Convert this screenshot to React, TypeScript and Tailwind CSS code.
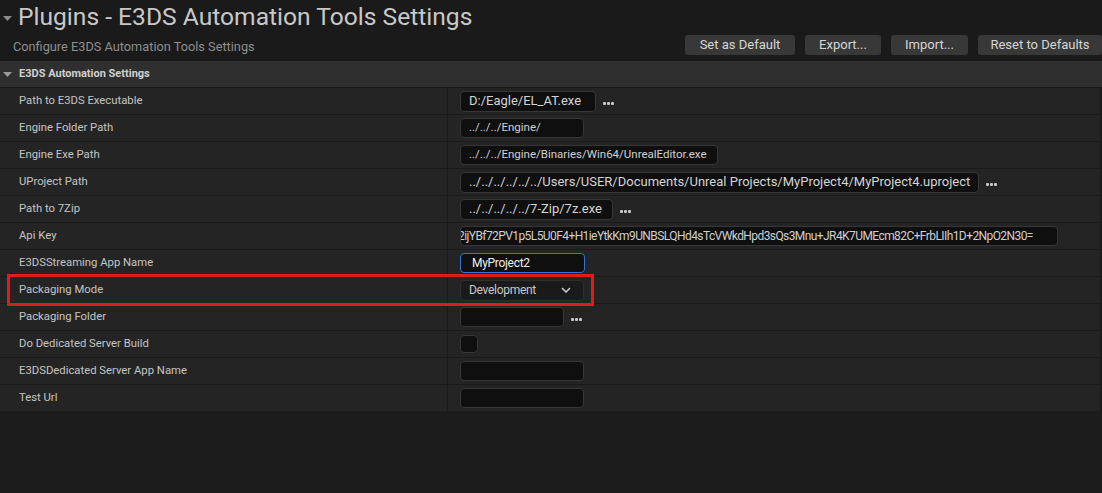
import React from "react";

type Row = {
  label: string;
  kind?: "input" | "api" | "focused" | "dropdown" | "checkbox";
  w?: number;
  text?: string;
  big?: boolean;
  dots?: boolean;
};

const rows: Row[] = [
  { label: "Path to E3DS Executable", w: 136, text: "D:/Eagle/EL_AT.exe", big: true, dots: true },
  { label: "Engine Folder Path", w: 124, text: "../../../Engine/" },
  { label: "Engine Exe Path", w: 258, text: "../../../Engine/Binaries/Win64/UnrealEditor.exe" },
  {
    label: "UProject Path",
    w: 519,
    text: "../../../../../../Users/USER/Documents/Unreal Projects/MyProject4/MyProject4.uproject",
    big: true,
    dots: true,
  },
  { label: "Path to 7Zip", w: 153, text: "../../../../../7-Zip/7z.exe", big: true, dots: true },
  { label: "Api Key", kind: "api" },
  { label: "E3DSStreaming App Name", kind: "focused" },
  { label: "Packaging Mode", kind: "dropdown" },
  { label: "Packaging Folder", w: 104, text: "", dots: true },
  { label: "Do Dedicated Server Build", kind: "checkbox" },
  { label: "E3DSDedicated Server App Name", w: 124, text: "" },
  { label: "Test Url", w: 124, text: "" },
];

function Dots() {
  return (
    <div className="ml-[7px] mt-[5px] flex gap-[1px]">
      <span className="block h-[3px] w-[3px] rounded-[1px] bg-[#c8c8c8]" />
      <span className="block h-[3px] w-[3px] rounded-[1px] bg-[#c8c8c8]" />
      <span className="block h-[3px] w-[3px] rounded-[1px] bg-[#c8c8c8]" />
    </div>
  );
}

function Value({ r }: { r: Row }) {
  if (r.kind === "api") {
    return (
      <div className="flex h-[20px] w-[598px] items-center overflow-hidden rounded-[4px] border border-[#363636] bg-[#0f0f0f]">
        <span className="ml-[-3px] whitespace-nowrap text-[12px] tracking-[-0.58px] text-[#d0d0d0]">
          2ijYBf72PV1p5L5U0F4+H1ieYtkKm9UNBSLQHd4sTcVWkdHpd3sQs3Mnu+JR4K7UMEcm82C+FrbLIIh1D+2NpO2N30=
        </span>
      </div>
    );
  }
  if (r.kind === "focused") {
    return (
      <div className="flex h-[20px] w-[125px] items-center rounded-[4px] border border-[#2f74d6] bg-[#0f0f0f] pl-[11px]">
        <span className="text-[12px] tracking-[-0.3px] text-[#f0f0f0]">MyProject2</span>
      </div>
    );
  }
  if (r.kind === "dropdown") {
    return (
      <div className="flex h-[21px] w-[124px] items-center justify-between rounded-[4px] border border-[#2e2e2e] bg-[#1a1a1a] pl-[8px] pr-[12px]">
        <span className="text-[12px] tracking-[-0.3px] text-[#c8c8c8]">Development</span>
        <svg width="10" height="6" viewBox="0 0 10 6">
          <path d="M1 1 L5 5 L9 1" fill="none" stroke="#c8c8c8" strokeWidth="1.6" />
        </svg>
      </div>
    );
  }
  if (r.kind === "checkbox") {
    return <div className="h-[18px] w-[18px] rounded-[4px] border border-[#363636] bg-[#0f0f0f]" />;
  }
  return (
    <div className="flex items-center">
      <div
        className={
          r.big
            ? "flex h-[21px] items-center rounded-[4px] border border-[#363636] bg-[#0f0f0f] pl-[8px]"
            : "flex h-[20px] items-center rounded-[4px] border border-[#363636] bg-[#0f0f0f] pl-[8px]"
        }
        style={{ width: r.w }}
      >
        <span
          className={
            r.big
              ? "whitespace-nowrap text-[13px] text-[#d4d4d4]"
              : "whitespace-nowrap text-[11.5px] text-[#d0d0d0]"
          }
        >
          {r.text}
        </span>
      </div>
      {r.dots && <Dots />}
    </div>
  );
}

export default function App() {
  return (
    <div
      className="relative h-[493px] w-[1102px] overflow-hidden bg-[#1c1c1c]"
      style={{ fontFamily: "Roboto, 'Noto Sans', sans-serif" }}
    >
      {/* Top */}
      <div className="flex h-[61px] bg-[#1a1a1a]">
        <div className="flex flex-1 flex-col">
          <div className="flex h-[34px] items-center">
            <svg width="18" height="34" viewBox="0 0 18 34" className="shrink-0">
              <path d="M3 16 L12 16 L7.5 21 Z" fill="#8a8a8a" />
            </svg>
            <span className="text-[24.6px] leading-[34px] text-[#c8c8c8]">
              Plugins - E3DS Automation Tools Settings
            </span>
          </div>
          <div className="pl-[13px] pt-[5px] text-[12.75px] leading-[16px] text-[#8e8e8e]">
            Configure E3DS Automation Tools Settings
          </div>
        </div>
        <div className="flex items-end gap-[10px] pb-[6px]">
          {[
            ["Set as Default", "w-[110px]"],
            ["Export...", "w-[76px]"],
            ["Import...", "w-[77px]"],
            ["Reset to Defaults", "w-[124px]"],
          ].map(([t, w]) => (
            <div
              key={t}
              className={`flex h-[20px] ${w} items-center justify-center rounded-[3px] bg-[#383838] text-[13px] text-[#d6d6d6]`}
            >
              {t}
            </div>
          ))}
        </div>
      </div>

      {/* Category header */}
      <div className="flex h-[26px] items-center bg-[#2f2f2f]">
        <svg width="19" height="26" viewBox="0 0 19 26" className="shrink-0">
          <path d="M3 11 L12 11 L7.5 16 Z" fill="#9a9a9a" />
        </svg>
        <span className="text-[11px] font-bold text-[#d0d0d0]">E3DS Automation Settings</span>
      </div>

      {/* Rows */}
      <div className="border-r-2 border-[#1a1a1a]">
        {rows.map((r) => (
          <div key={r.label} className="flex h-[27px] border-t border-[#1a1a1a] bg-[#242424]">
            <div className="flex w-[448px] items-center border-r border-[#1a1a1a] pl-[19px] text-[11.3px] text-[#c4c4c4]">
              {r.label}
            </div>
            <div className="flex flex-1 items-center pl-[12px]">
              <Value r={r} />
            </div>
          </div>
        ))}
      </div>

      {/* Annotation */}
      <div className="pointer-events-none absolute left-[7px] top-[274px] h-[32px] w-[587px] border-[3px] border-[#e11b1b]" />
    </div>
  );
}
